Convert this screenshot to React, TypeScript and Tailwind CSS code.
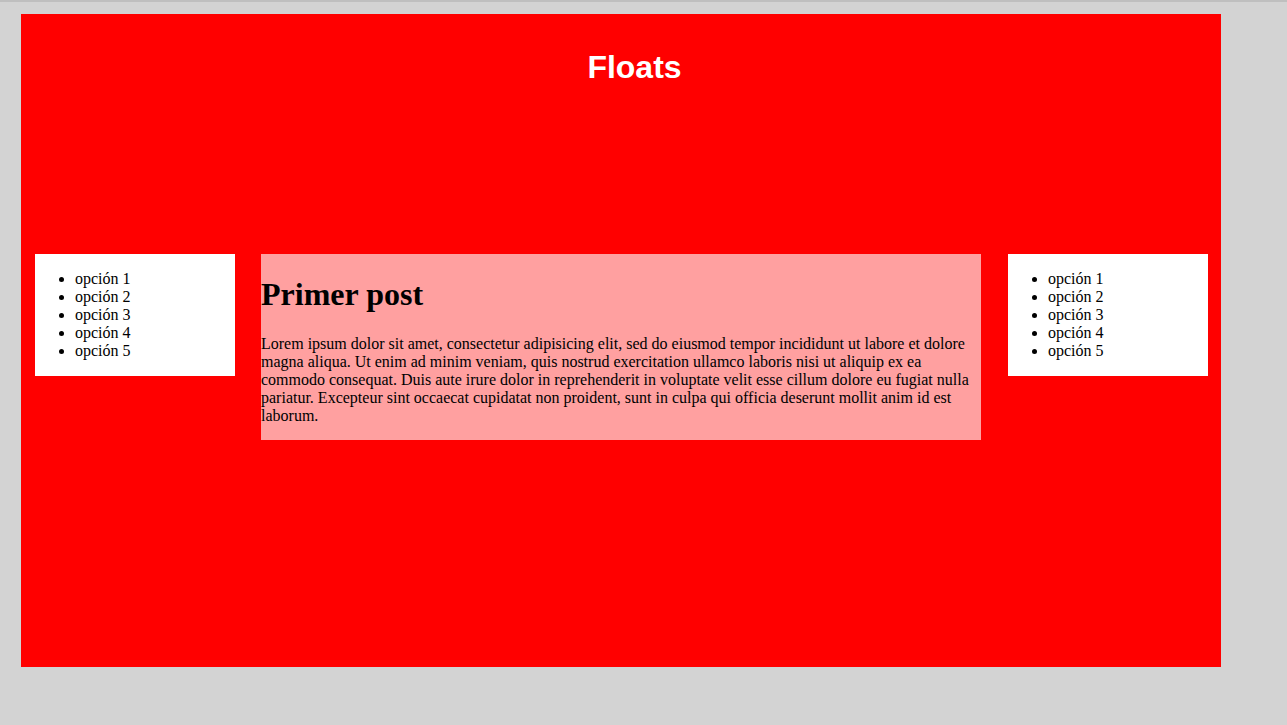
const opciones = ['opción 1', 'opción 2', 'opción 3', 'opción 4', 'opción 5'];

function Menu() {
  return (
    <div className="w-[200px] bg-white flow-root">
      <ul className="list-disc pl-10 my-4 leading-[18px]">
        {opciones.map((o) => (
          <li key={o}>{o}</li>
        ))}
      </ul>
    </div>
  );
}

export default function App() {
  return (
    <div className="min-h-screen bg-[#d3d3d3] border-t-2 border-[#bfbfbf] font-['Liberation_Serif',serif] text-[16px] text-black pt-3">
      <div className="ml-[21px] w-[1200px] h-[653px] bg-[#ff0000]">
        {/* Header */}
        <div className="h-[240px] pt-[35px] pl-[27px] text-center">
          <h1 className="font-['Liberation_Sans',Arial,sans-serif] font-bold text-[32px] leading-[37px] text-white">
            Floats
          </h1>
        </div>

        {/* Columns */}
        <div className="flex items-start pl-[14px]">
          <Menu />
          <div className="ml-[26px] w-[720px] bg-[#ffa0a0] flow-root">
            <h1 className="text-[32px] font-bold leading-[36px] mt-[22px] mb-[21px]">Primer post</h1>
            <p className="mt-[23px] mb-[15px] leading-[18px]">
              Lorem ipsum dolor sit amet, consectetur adipisicing elit, sed do eiusmod tempor incididunt ut labore et dolore
              magna aliqua. Ut enim ad minim veniam, quis nostrud exercitation ullamco laboris nisi ut aliquip ex ea
              commodo consequat. Duis aute irure dolor in reprehenderit in voluptate velit esse cillum dolore eu fugiat nulla
              pariatur. Excepteur sint occaecat cupidatat non proident, sunt in culpa qui officia deserunt mollit anim id est
              laborum.
            </p>
          </div>
          <div className="ml-[27px]">
            <Menu />
          </div>
        </div>
      </div>
    </div>
  );
}
